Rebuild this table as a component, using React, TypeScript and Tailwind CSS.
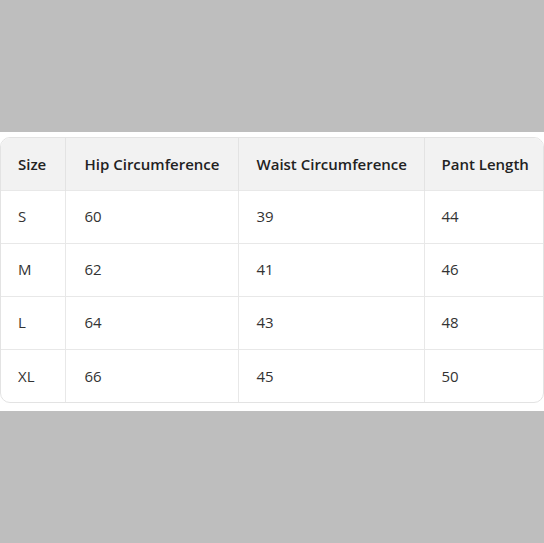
import React from 'react';

const rows = [
  { size: 'S', hip: '60', waist: '39', length: '44' },
  { size: 'M', hip: '62', waist: '41', length: '46' },
  { size: 'L', hip: '64', waist: '43', length: '48' },
  { size: 'XL', hip: '66', waist: '45', length: '50' },
];

export default function App() {
  return (
    <div className="w-[544px] h-[543px] bg-[#bebebe] flex flex-col justify-center" style={{ fontFamily: '"Open Sans", "Noto Sans", sans-serif' }}>
      <div className="bg-white pt-[5px] pb-[8px]">
        <div className="border border-[#e3e3e3] rounded-[10px] overflow-hidden">
          <table className="w-full table-fixed border-collapse text-[15px] text-[#333]">
            <colgroup>
              <col className="w-[64px]" />
              <col className="w-[173px]" />
              <col className="w-[186px]" />
              <col />
            </colgroup>
            <thead>
              <tr className="bg-[#f2f2f2] h-[52px]">
                <th className="text-left font-semibold text-[#222] pl-[17px] border-r border-[#e3e3e3]">Size</th>
                <th className="text-left font-semibold text-[#222] pl-[19px] border-r border-[#e3e3e3]">Hip Circumference</th>
                <th className="text-left font-semibold text-[#222] pl-[18px] border-r border-[#e3e3e3]">Waist Circumference</th>
                <th className="text-left font-semibold text-[#222] pl-[17px]">Pant Length</th>
              </tr>
            </thead>
            <tbody>
              {rows.map(r => (
                <tr key={r.size} className="h-[53px] border-t border-[#e8e8e8]">
                  <td className="pl-[17px] border-r border-[#e8e8e8]">{r.size}</td>
                  <td className="pl-[19px] border-r border-[#e8e8e8]">{r.hip}</td>
                  <td className="pl-[18px] border-r border-[#e8e8e8]">{r.waist}</td>
                  <td className="pl-[17px]">{r.length}</td>
                </tr>
              ))}
            </tbody>
          </table>
        </div>
      </div>
    </div>
  );
}
